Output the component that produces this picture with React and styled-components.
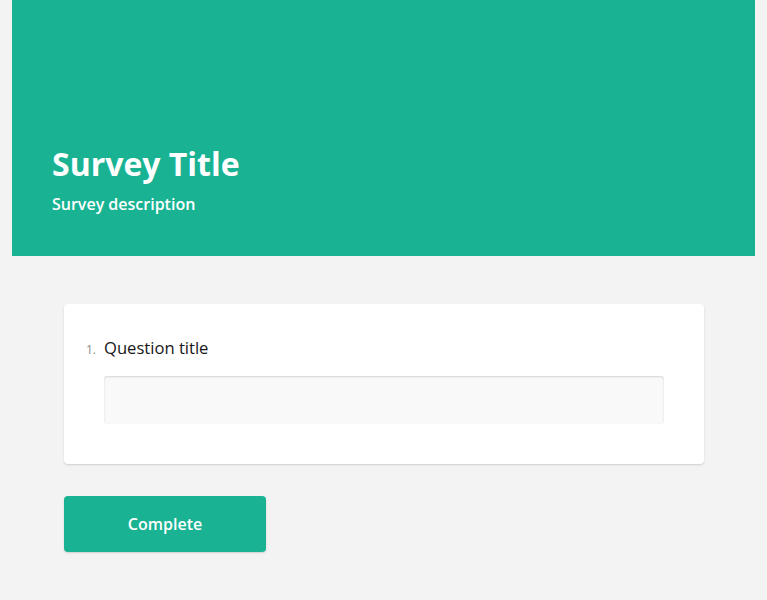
import React from "react";
import styled, { createGlobalStyle } from "styled-components";

const GlobalStyle = createGlobalStyle`
  html, body {
    margin: 0;
    padding: 0;
    background-color: #f3f3f3;
  }
  body {
    font-family: "Open Sans", "Liberation Sans", sans-serif;
  }
`;

const Page = styled.div`
  padding: 0 12px;
  min-height: 600px;
  box-sizing: border-box;
`;

const Header = styled.div`
  background-color: #19b394;
  height: 256px;
  box-sizing: border-box;
  padding: 0 40px 40px;
  display: flex;
  flex-direction: column;
  justify-content: flex-end;
  color: #fff;
`;

const Title = styled.h1`
  margin: 0;
  font-size: 32px;
  line-height: 40px;
  font-weight: 700;
`;

const Description = styled.div`
  margin-top: 8px;
  font-size: 16px;
  line-height: 24px;
  font-weight: 600;
`;

const Body = styled.div`
  padding: 48px 51px 0 52px;
`;

const Card = styled.div`
  background: #fff;
  border-radius: 4px;
  box-shadow: 0 1px 2px rgba(0, 0, 0, 0.15);
  padding: 32px 40px 40px;
`;

const QuestionHeader = styled.div`
  display: flex;
  align-items: baseline;
  height: 24px;
  margin-left: -18px;
`;

const Number = styled.span`
  flex: 0 0 18px;
  font-size: 12px;
  line-height: 1;
  color: #8a8a8a;
`;

const QuestionTitle = styled.span`
  font-size: 16.6px;
  line-height: 24px;
  color: #161616;
`;

const TextInput = styled.input`
  display: block;
  width: 100%;
  height: 48px;
  box-sizing: border-box;
  margin-top: 16px;
  border: none;
  border-radius: 3px;
  background: #f9f9f9;
  box-shadow: inset 0 1px 2px rgba(0, 0, 0, 0.15);
  padding: 0 16px;
  font-family: inherit;
  font-size: 16px;
  outline: none;
`;

const Footer = styled.div`
  padding-top: 32px;
`;

const CompleteButton = styled.button`
  width: 202px;
  height: 56px;
  border: none;
  border-radius: 4px;
  background-color: #19b394;
  color: #fff;
  font-family: inherit;
  font-size: 16px;
  font-weight: 600;
  box-shadow: 0 1px 2px rgba(0, 0, 0, 0.15);
  cursor: pointer;
`;

export default function App() {
  return (
    <Page>
      <GlobalStyle />
      <Header>
        <Title>Survey Title</Title>
        <Description>Survey description</Description>
      </Header>
      <Body>
        <Card>
          <QuestionHeader>
            <Number>1.</Number>
            <QuestionTitle>Question title</QuestionTitle>
          </QuestionHeader>
          <TextInput type="text" />
        </Card>
        <Footer>
          <CompleteButton>Complete</CompleteButton>
        </Footer>
      </Body>
    </Page>
  );
}
